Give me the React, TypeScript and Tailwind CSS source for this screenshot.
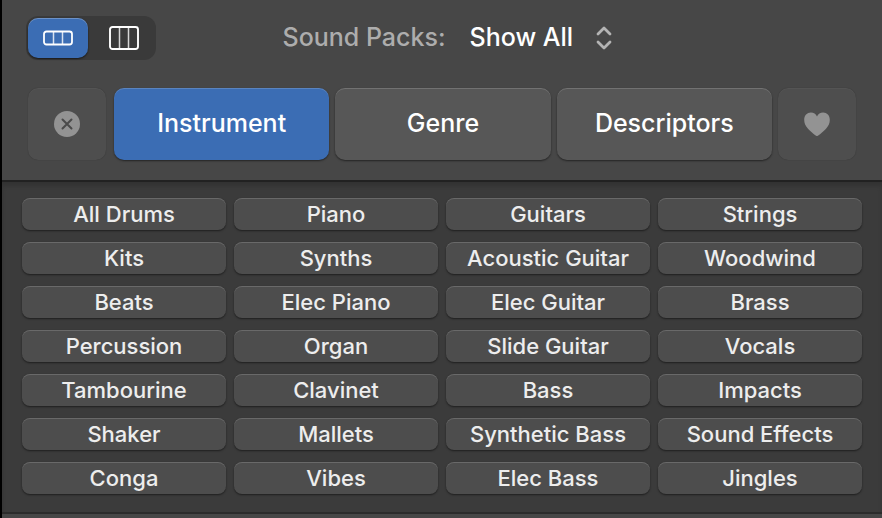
import { useState } from "react";

const columns = [
  ["All Drums", "Kits", "Beats", "Percussion", "Tambourine", "Shaker", "Conga"],
  ["Piano", "Synths", "Elec Piano", "Organ", "Clavinet", "Mallets", "Vibes"],
  ["Guitars", "Acoustic Guitar", "Elec Guitar", "Slide Guitar", "Bass", "Synthetic Bass", "Elec Bass"],
  ["Strings", "Woodwind", "Brass", "Vocals", "Impacts", "Sound Effects", "Jingles"],
];
const keywords = columns[0].flatMap((_, row) => columns.map((column) => column[row]));

const raised = "shadow-[inset_0_1px_0_rgba(255,255,255,0.16),0_1px_2px_rgba(0,0,0,0.5)]";
const subdued =
  "flex w-[78px] shrink-0 items-center justify-center rounded-[10px] bg-[#4e4e4e] text-[#939393] shadow-[inset_0_1px_0_rgba(255,255,255,0.04),0_0_1px_rgba(0,0,0,0.35)]";

function ViewSwitch() {
  const [view, setView] = useState("button");
  const active = "bg-[#3b6db4] shadow-[inset_0_1px_0_rgba(255,255,255,0.25),0_1px_2px_rgba(0,0,0,0.6)]";
  return (
    <div className="flex h-11 w-[130px] gap-1.5 rounded-xl bg-[#3a3a3a] p-0.5">
      <button
        aria-label="Button view"
        aria-pressed={view === "button"}
        onClick={() => setView("button")}
        className={`flex w-[60px] items-center justify-center rounded-[10px] ${view === "button" ? active : ""}`}
      >
        <svg width="30" height="16" viewBox="0 0 30 16" fill="none" stroke="white">
          <rect x="1" y="1.5" width="28" height="13" rx="2.5" strokeWidth="1.8" />
          <path d="M10.5 2v12M19.5 2v12" strokeWidth="1.5" strokeOpacity="0.8" />
        </svg>
      </button>
      <button
        aria-label="Column view"
        aria-pressed={view === "column"}
        onClick={() => setView("column")}
        className={`flex flex-1 items-center justify-center rounded-[10px] ${view === "column" ? active : ""}`}
      >
        <svg width="30" height="24" viewBox="0 0 30 24" fill="none" stroke="white">
          <rect x="1" y="1" width="28" height="22" rx="2.5" strokeWidth="1.9" />
          <path d="M10.5 2v20M19.5 2v20" strokeWidth="1.5" strokeOpacity="0.8" />
        </svg>
      </button>
    </div>
  );
}

function FilterBar() {
  const [filter, setFilter] = useState("Instrument");
  return (
    <div className="flex h-[72px] gap-1.5">
      <button aria-label="Clear filters" className={`mr-0.5 ${subdued}`}>
        <svg width="26" height="26" viewBox="0 0 26 26">
          <circle cx="13" cy="13" r="13" fill="currentColor" />
          <path d="M8.5 8.5l9 9M17.5 8.5l-9 9" stroke="#4a4a4a" strokeWidth="2" strokeLinecap="round" />
        </svg>
      </button>
      {["Instrument", "Genre", "Descriptors"].map((name) => (
        <button
          key={name}
          aria-pressed={filter === name}
          onClick={() => setFilter(name)}
          className={`min-w-0 flex-1 rounded-[10px] pb-0.5 text-[25px] leading-8 font-medium text-white ${raised} ${filter === name ? "bg-[#3b6db4]" : "bg-[#575757]"}`}
        >
          {name}
        </button>
      ))}
      <button aria-label="Favorites" className={subdued}>
        <svg width="26" height="24" viewBox="0 0 26 24" fill="currentColor">
          <path d="M13 24C12.3 24 7 20.2 4 16.7C1.4 13.8 0.2 11 0.2 7.7C0.2 3.5 3.1 0.5 6.9 0.5C9.7 0.5 11.9 2 13 4.5C14.1 2 16.3 0.5 19.1 0.5C22.9 0.5 25.8 3.5 25.8 7.7C25.8 11 24.6 13.8 22 16.7C19 20.2 13.7 24 13 24Z" />
        </svg>
      </button>
    </div>
  );
}

export default function App() {
  return (
    <div className="min-h-screen border-l-2 border-black bg-[#474747] font-['Inter','Liberation_Sans',sans-serif]">
      <header className="border-b-2 border-[#212121] pb-5">
        <div className="grid grid-cols-[1fr_auto_1fr] items-center pt-4 pr-[14px] pl-6">
          <ViewSwitch />
          <div className="flex items-center text-[25px] leading-8 font-medium">
            <label htmlFor="packs" className="pr-6 pb-0.5 text-[#adadad]">
              Sound Packs:
            </label>
            <div className="grid items-center">
              <select
                id="packs"
                className="col-start-1 row-start-1 appearance-none bg-transparent pr-[38px] pb-0.5 text-white"
              >
                <option>Show All</option>
              </select>
              <svg
                width="16"
                height="24"
                viewBox="0 0 16 24"
                fill="none"
                stroke="#b4b4b4"
                strokeWidth="2.8"
                strokeLinecap="round"
                strokeLinejoin="round"
                className="pointer-events-none col-start-1 row-start-1 justify-self-end"
              >
                <path d="M2 8l6-6 6 6M2 16l6 6 6-6" />
              </svg>
            </div>
          </div>
        </div>
        <div className="pt-7 pr-[26px] pl-[26px]">
          <FilterBar />
        </div>
      </header>
      <main className="grid grid-cols-4 gap-x-2 gap-y-3 border-b-2 border-[#2c2c2c] bg-[#3b3b3b] px-5 pt-4 pb-[18px] shadow-[inset_0_4px_4px_rgba(0,0,0,0.15)]">
        {keywords.map((name) => (
          <button
            key={name}
            className={`h-8 truncate rounded-lg bg-[#4d4d4d] text-[22px] leading-8 font-medium text-[#ededed] ${raised}`}
          >
            {name}
          </button>
        ))}
      </main>
    </div>
  );
}
